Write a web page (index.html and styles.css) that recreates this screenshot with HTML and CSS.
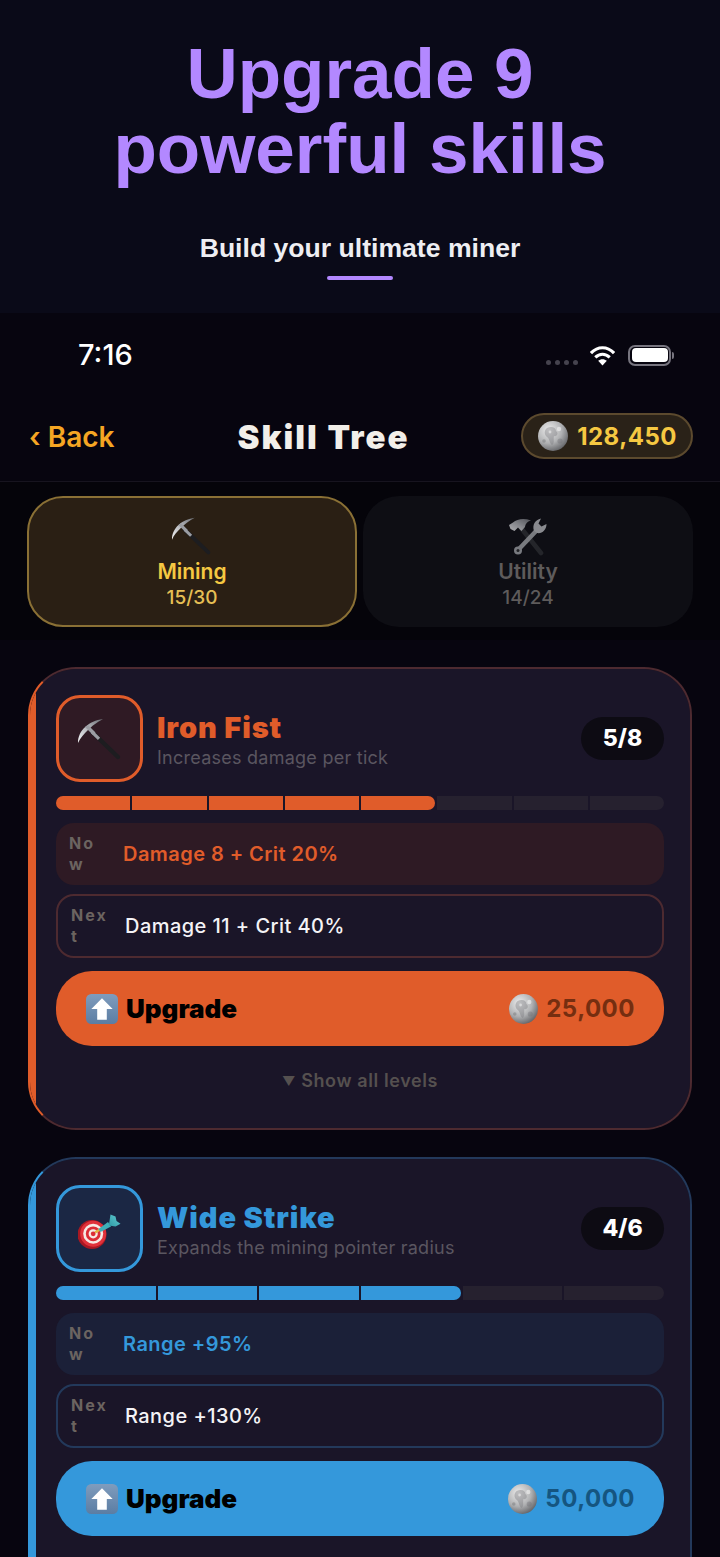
FILE: index.html
```html
<!DOCTYPE html>
<html lang="en">
<head>
    <meta charset="UTF-8">
    <meta name="viewport" content="width=device-width, initial-scale=1.0">
    <title>Skill Tree</title>
    <link rel="stylesheet" href="styles.css">
</head>
<body>
    <svg class="sprite" xmlns="http://www.w3.org/2000/svg">
        <defs>
            <linearGradient id="steel" x1="0" y1="1" x2="1" y2="0">
                <stop offset="0" stop-color="#f4f4f6"/>
                <stop offset="0.5" stop-color="#b4b6bb"/>
                <stop offset="1" stop-color="#6c6e74"/>
            </linearGradient>
            <radialGradient id="coinFill" cx="0.36" cy="0.3" r="0.8">
                <stop offset="0" stop-color="#ececec"/>
                <stop offset="0.55" stop-color="#b0b1b3"/>
                <stop offset="1" stop-color="#55565a"/>
            </radialGradient>
            <linearGradient id="arrowBox" x1="0" y1="0" x2="0" y2="1">
                <stop offset="0" stop-color="#7f9cbd"/>
                <stop offset="1" stop-color="#5b7da3"/>
            </linearGradient>
            <linearGradient id="flight" x1="0" y1="1" x2="1" y2="0">
                <stop offset="0" stop-color="#2f9aa6"/>
                <stop offset="1" stop-color="#62ccd2"/>
            </linearGradient>
            <symbol id="pick" viewBox="0 0 44 44">
                <path d="M14 15 L40 40" stroke="#1d1d20" stroke-width="4.4" stroke-linecap="round"/>
                <path d="M14 15 L21 21.8" stroke="#9b9da3" stroke-width="3.2"/>
                <path d="M0 26 C0 13 11 4 25 2 C18 6 14 9 10 13 C6 17 2 21 0 26 Z" fill="url(#steel)"/>
                <path d="M7 10 L15 18 L17.5 15.5 L10 8 Z" fill="#9b9da3"/>
            </symbol>
            <symbol id="tools" viewBox="0 0 40 40">
                <path d="M13 12 L33 37" stroke="#2e3034" stroke-width="4.6" stroke-linecap="round"/>
                <path d="M30 13 L11 33" stroke="#a6a8ad" stroke-width="4.4"/>
                <circle cx="10" cy="34.5" r="4" fill="#a6a8ad"/>
                <circle cx="10" cy="34.5" r="1.5" fill="#2a2b2f"/>
                <path d="M1 9 L5 6.5 C9 3 16 2 23 4.5 C19 5.5 17.5 8 17 11 L13.5 15 L10 11.5 L6.5 15 L2.5 13 Z" fill="url(#steel)"/>
                <path d="M26 15 C24 9 27 4 33 2.5 L30.5 7.5 L33.5 10.5 L38.5 8 C38.5 14 34 18 29 17 Z" fill="#bdbfc3"/>
            </symbol>
            <symbol id="dart" viewBox="0 0 44 44">
                <circle cx="14" cy="27.5" r="14.5" fill="#a81822"/>
                <circle cx="15.2" cy="26.8" r="13" fill="#e0313a"/>
                <circle cx="15.2" cy="26.8" r="10" fill="#f6e9e4"/>
                <circle cx="15.2" cy="26.8" r="7.4" fill="#dc2c35"/>
                <circle cx="15.2" cy="26.8" r="4.6" fill="#f6e9e4"/>
                <circle cx="15.2" cy="26.8" r="2.4" fill="#dc2c35"/>
                <path d="M17 25.5 L22 22.5" stroke="#e3b341" stroke-width="2.4"/>
                <path d="M20.5 22 L30 15 L33 19.5 L22.5 25 Z" fill="#3fb0b8"/>
                <path d="M30.8 18.5 L32.5 7.5 L37.5 9.5 L38.5 14 L42.5 16.8 L37.5 19.5 Z" fill="url(#flight)"/>
            </symbol>
            <symbol id="coin" viewBox="0 0 30 30" preserveAspectRatio="none">
                <circle cx="15" cy="15" r="15" fill="url(#coinFill)"/>
                <path d="M9 7 C13 5 18 6 18 10 C21 12 19 16 16 15 C15 19 17 22 14 24 C11 22 12 18 9 16 C6 14 6 9 9 7 Z" fill="#77787c" opacity="0.4"/>
                <circle cx="21" cy="8" r="2.2" fill="#f4f4f4" opacity="0.6"/>
                <circle cx="6" cy="20" r="1.8" fill="#6a6b6f" opacity="0.4"/>
                <circle cx="22" cy="20" r="2.6" fill="#6a6b6f" opacity="0.35"/>
                <circle cx="12" cy="11" r="1.4" fill="#f0f0f0" opacity="0.6"/>
            </symbol>
            <symbol id="uparrow" viewBox="0 0 30 28" preserveAspectRatio="none">
                <rect x="0" y="0" width="30" height="28" rx="5" fill="url(#arrowBox)"/>
                <path d="M15 4 L25 14 L19.5 14 L19.5 24 L10.5 24 L10.5 14 L5 14 Z" fill="#ffffff"/>
            </symbol>
        </defs>
    </svg>

    <header class="promo">
        <h1 class="promo-title">Upgrade 9<br>powerful skills</h1>
        <div class="promo-sub">Build your ultimate miner</div>
        <div class="promo-line"></div>
    </header>

    <main class="phone">
        <div class="status-bar">
            <span class="status-time">7:16</span>
            <div class="status-icons">
                <div class="signal"><i></i><i></i><i></i><i></i></div>
                <svg class="wifi" viewBox="0 0 26 21">
                    <path d="M1 8 C8 0.5 18 0.5 25 8" fill="none" stroke="#fff" stroke-width="3.2"/>
                    <path d="M5.5 12.5 C10 8 16 8 20.5 12.5" fill="none" stroke="#fff" stroke-width="3.2"/>
                    <path d="M13 21 L8.5 16 C11 13.8 15 13.8 17.5 16 Z" fill="#fff"/>
                </svg>
                <div class="battery"><div class="battery-body"><div class="battery-fill"></div></div><div class="battery-cap"></div></div>
            </div>
        </div>

        <nav class="nav">
            <div class="back">‹ Back</div>
            <div class="nav-title">Skill Tree</div>
            <div class="balance">
                <svg class="coin-lg"><use href="#coin"/></svg>
                <span>128,450</span>
            </div>
        </nav>

        <div class="tabs">
            <div class="tab active">
                <svg class="tab-icon"><use href="#pick"/></svg>
                <div class="tab-name">Mining</div>
                <div class="tab-count">15/30</div>
            </div>
            <div class="tab">
                <svg class="tab-icon dim"><use href="#tools"/></svg>
                <div class="tab-name">Utility</div>
                <div class="tab-count">14/24</div>
            </div>
        </div>

        <div class="skill-list">
            <section class="card orange">
                <div class="card-head">
                    <div class="skill-icon"><svg class="skill-svg"><use href="#pick"/></svg></div>
                    <div class="skill-info">
                        <div class="skill-name">Iron Fist</div>
                        <div class="skill-desc">Increases damage per tick</div>
                    </div>
                    <div class="level">5/8</div>
                </div>
                <div class="progress">
                    <div class="seg on"></div><div class="seg on"></div><div class="seg on"></div><div class="seg on"></div><div class="seg on last"></div><div class="seg"></div><div class="seg"></div><div class="seg"></div>
                </div>
                <div class="row now">
                    <div class="row-label">Now</div>
                    <div class="row-value">Damage 8 + Crit 20%</div>
                </div>
                <div class="row next">
                    <div class="row-label">Next</div>
                    <div class="row-value">Damage 11 + Crit 40%</div>
                </div>
                <div class="upgrade">
                    <svg class="arrow"><use href="#uparrow"/></svg>
                    <span class="upgrade-text">Upgrade</span>
                    <svg class="coin-sm"><use href="#coin"/></svg>
                    <span class="cost">25,000</span>
                </div>
                <div class="show-all"><span class="tri">▼</span> Show all levels</div>
            </section>

            <section class="card blue">
                <div class="card-head">
                    <div class="skill-icon"><svg class="skill-svg"><use href="#dart"/></svg></div>
                    <div class="skill-info">
                        <div class="skill-name">Wide Strike</div>
                        <div class="skill-desc">Expands the mining pointer radius</div>
                    </div>
                    <div class="level">4/6</div>
                </div>
                <div class="progress">
                    <div class="seg on"></div><div class="seg on"></div><div class="seg on"></div><div class="seg on last"></div><div class="seg"></div><div class="seg"></div>
                </div>
                <div class="row now">
                    <div class="row-label">Now</div>
                    <div class="row-value">Range +95%</div>
                </div>
                <div class="row next">
                    <div class="row-label">Next</div>
                    <div class="row-value">Range +130%</div>
                </div>
                <div class="upgrade">
                    <svg class="arrow"><use href="#uparrow"/></svg>
                    <span class="upgrade-text">Upgrade</span>
                    <svg class="coin-sm"><use href="#coin"/></svg>
                    <span class="cost">50,000</span>
                </div>
            </section>
        </div>
    </main>
</body>
</html>
```

FILE: styles.css
```css
html,
body {
    height: 1557px;
    overflow: hidden;
}

body {
    margin: 0;
    font-family: Inter, "Noto Sans", sans-serif;
    background-color: #07050f;
    color: #ffffff;
}

.sprite {
    display: block;
    width: 0;
    height: 0;
}

/* promo header */
.promo {
    height: 313px;
    box-sizing: border-box;
    padding-top: 36px;
    background-color: #0a0a18;
    text-align: center;
    font-family: "Liberation Sans", Arial, sans-serif;
}

.promo-title {
    margin: 0;
    font-size: 71px;
    line-height: 75px;
    font-weight: bold;
    color: #b388ff;
}

.promo-sub {
    margin-top: 47px;
    font-size: 26.6px;
    line-height: 30px;
    font-weight: bold;
    color: #eeeef2;
}

.promo-line {
    width: 66px;
    height: 4px;
    margin: 13px auto 0;
    border-radius: 2px;
    background-color: #b388ff;
}

/* status bar */
.status-bar {
    height: 84px;
    box-sizing: border-box;
    padding: 24px 46px 0 78px;
    display: flex;
    justify-content: space-between;
    align-items: flex-start;
}

.status-time {
    font-size: 29px;
    line-height: 36px;
    font-weight: 500;
}

.status-icons {
    display: flex;
    align-items: center;
    gap: 12px;
    height: 36px;
}

.signal {
    display: flex;
    gap: 4px;
    margin-top: 14px;
}

.signal i {
    width: 5px;
    height: 5px;
    border-radius: 50%;
    background-color: #45434e;
}

.wifi {
    width: 25px;
    height: 21px;
}

.battery {
    display: flex;
    align-items: center;
    gap: 1px;
    margin-left: 1px;
}

.battery-body {
    width: 43px;
    height: 21px;
    box-sizing: border-box;
    padding: 1.5px;
    border: 2px solid #77757f;
    border-radius: 7px;
}

.battery-fill {
    height: 100%;
    border-radius: 4px;
    background-color: #ffffff;
}

.battery-cap {
    width: 2px;
    height: 7px;
    border-radius: 0 2px 2px 0;
    background-color: #77757f;
}

/* nav */
.nav {
    height: 85px;
    box-sizing: border-box;
    padding: 16px 27px 0 29px;
    display: flex;
    justify-content: space-between;
    align-items: flex-start;
    border-bottom: 1px solid #17141f;
}

.back {
    width: 97px;
    font-size: 28px;
    line-height: 48px;
    font-weight: 600;
    color: #f5a623;
}

.nav-title {
    font-size: 33px;
    line-height: 48px;
    font-weight: 900;
    letter-spacing: 2px;
    white-space: nowrap;
    color: #f2efe9;
}

.balance {
    display: flex;
    align-items: center;
    gap: 9px;
    height: 46px;
    box-sizing: border-box;
    padding: 0 14px 0 15px;
    border: 2px solid #5c4a2e;
    border-radius: 23px;
    background-color: #2a2218;
    font-size: 24px;
    font-weight: 700;
    letter-spacing: 0.5px;
    color: #f5c842;
}

.coin-lg {
    width: 30px;
    height: 30px;
}

/* category tabs */
.tabs {
    display: flex;
    gap: 6px;
    padding: 14px 27px 13px;
    background-color: #05040a;
}

.tab {
    flex: 1;
    height: 131px;
    box-sizing: border-box;
    padding-top: 18px;
    border: 2px solid transparent;
    border-radius: 36px;
    background-color: #0e0e14;
    text-align: center;
    color: #5e5b5b;
}

.tab.active {
    border-color: #8a7035;
    background-color: #2a1f14;
    color: #f5c842;
}

.tab-icon {
    display: block;
    width: 40px;
    height: 40px;
    margin: 0 auto;
}

.tab-icon.dim {
    opacity: 0.7;
}

.tab-name {
    margin-top: 1px;
    font-size: 21px;
    line-height: 29px;
    font-weight: 600;
}

.tab-count {
    font-size: 19px;
    line-height: 24px;
    font-weight: 500;
}

.tab.active .tab-count {
    color: #e6bf55;
}

/* skill cards */
.skill-list {
    display: flex;
    flex-direction: column;
    gap: 27px;
    padding: 27px 28px 0;
}

/* the accent stripe is painted in the padding box so the radius clips it */
.card {
    box-sizing: border-box;
    padding: 26px;
    border: 2px solid var(--edge);
    border-left-color: var(--accent);
    border-radius: 48px;
    background: linear-gradient(90deg, var(--accent) 6px, #1a1528 6px) padding-box;
}

.card.orange {
    --accent: #e05c2a;
    --edge: #4d2a30;
    --soft: #2e1a24;
    --icon: #2f1a24;
    --cost: #752e10;
}

/* runs past the bottom of the window */
.card.blue {
    --accent: #3498db;
    --edge: #23395b;
    --soft: #1b2038;
    --icon: #1b2744;
    --cost: #155580;
    padding-bottom: 100px;
}

.card-head {
    display: flex;
    align-items: center;
}

.skill-icon {
    width: 87px;
    height: 87px;
    box-sizing: border-box;
    display: flex;
    align-items: center;
    justify-content: center;
    border: 3px solid var(--accent);
    border-radius: 24px;
    background-color: var(--icon);
}

.skill-svg {
    width: 44px;
    height: 44px;
}

.skill-info {
    flex: 1;
    padding: 3px 0 0 14px;
}

.skill-name {
    font-size: 29px;
    line-height: 36px;
    font-weight: 900;
    letter-spacing: 0.9px;
    color: var(--accent);
}

.skill-desc {
    font-size: 18px;
    line-height: 24px;
    letter-spacing: 0.25px;
    color: #5a5660;
}

.level {
    width: 83px;
    height: 43px;
    line-height: 43px;
    border-radius: 22px;
    background-color: #0d0b13;
    text-align: center;
    font-size: 23px;
    font-weight: 800;
}

.progress {
    display: flex;
    height: 14px;
    margin-top: 14px;
    border-radius: 7px;
    overflow: hidden;
}

.seg {
    flex: 1;
    background-color: #26212f;
}

.seg + .seg {
    border-left: 2px solid #1a1528;
}

.seg.on {
    background-color: var(--accent);
}

.seg.last {
    border-radius: 0 7px 7px 0;
}

.row {
    display: flex;
    align-items: center;
    box-sizing: border-box;
    padding: 0 13px;
    border-radius: 18px;
}

.row.now {
    height: 62px;
    margin-top: 13px;
    background-color: var(--soft);
}

.row.next {
    height: 64px;
    margin-top: 9px;
    border: 2px solid var(--edge);
}

.row-label {
    flex: none;
    width: 38px;
    margin-right: 16px;
    font-size: 16px;
    line-height: 21px;
    font-weight: 700;
    letter-spacing: 2px;
    word-break: break-all;
    color: #6b6460;
}

.row-value {
    font-size: 20px;
    font-weight: 500;
    letter-spacing: 0.45px;
    color: #f4f3f6;
}

.row.now .row-value {
    font-weight: 600;
    color: var(--accent);
}

.upgrade {
    display: flex;
    align-items: center;
    height: 75px;
    margin-top: 13px;
    padding: 0 29px 0 30px;
    border-radius: 36px;
    background-color: var(--accent);
}

.arrow {
    width: 32px;
    height: 30px;
    margin-right: 8px;
}

.upgrade-text {
    flex: 1;
    font-size: 26px;
    font-weight: 900;
    color: #000000;
}

.coin-sm {
    width: 29px;
    height: 30px;
    margin-right: 8px;
}

.cost {
    font-size: 24px;
    font-weight: 700;
    letter-spacing: 0.5px;
    color: var(--cost);
}

.show-all {
    margin: 23px 0 9px;
    text-align: center;
    font-size: 18px;
    line-height: 24px;
    font-weight: 600;
    letter-spacing: 0.6px;
    color: #55504f;
}

.tri {
    font-size: 13px;
    vertical-align: 1px;
}
```
